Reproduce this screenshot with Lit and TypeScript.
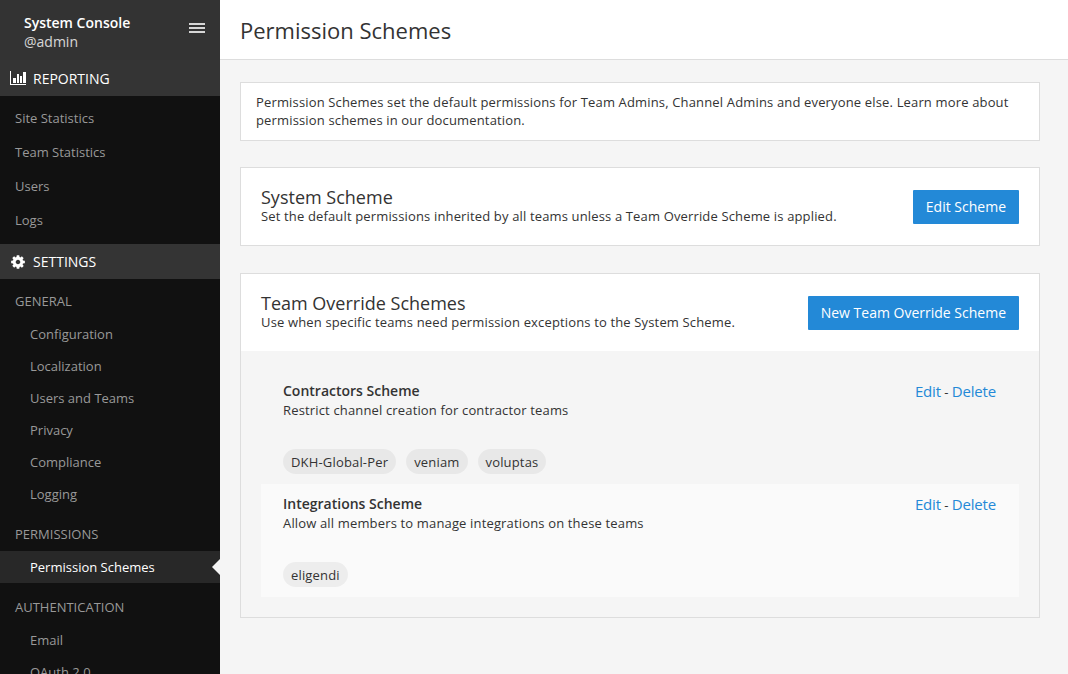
import { LitElement, html, css, svg } from "lit";
import { customElement, property } from "lit/decorators.js";

interface NavGroup {
  title: string;
  items: string[];
}

interface Scheme {
  name: string;
  description: string;
  teams: string[];
}

const reporting = ["Site Statistics", "Team Statistics", "Users", "Logs"];

const groups: NavGroup[] = [
  {
    title: "GENERAL",
    items: ["Configuration", "Localization", "Users and Teams", "Privacy", "Compliance", "Logging"],
  },
  { title: "PERMISSIONS", items: ["Permission Schemes"] },
  { title: "AUTHENTICATION", items: ["Email", "OAuth 2.0"] },
];

const schemes: Scheme[] = [
  {
    name: "Contractors Scheme",
    description: "Restrict channel creation for contractor teams",
    teams: ["DKH-Global-Per", "veniam", "voluptas"],
  },
  {
    name: "Integrations Scheme",
    description: "Allow all members to manage integrations on these teams",
    teams: ["eligendi"],
  },
];

const chartIcon = html`<svg width="16" height="15" viewBox="0 0 16 15" fill="currentColor" shape-rendering="crispEdges">
  ${svg`<path d="M0 0h1v13h15v1h-16z"/><path d="M3 7h3v5h-3zM7 3h2v9h-2zM10 5h2v7h-2zM13 1h3v11h-3z"/>`}
</svg>`;

const gearIcon = html`<svg width="16" height="16" viewBox="0 0 1792 1792" fill="currentColor">
  ${svg`<path d="M1152 896q0-106-75-181t-181-75-181 75-75 181 75 181 181 75 181-75 75-181zm512-109v222q0 12-8 23t-20 13l-185 28q-19 54-39 91 35 50 107 138 10 12 10 25t-9 23q-27 37-99 108t-94 71q-12 0-26-9l-138-108q-44 23-91 38-16 136-29 186-7 28-36 28h-222q-14 0-24.500-8.500t-11.500-21.500l-28-184q-49-16-90-37l-141 107q-10 9-25 9-14 0-25-11-126-114-165-168-7-10-7-23 0-12 8-23 15-21 51-66.500t54-70.500q-27-50-41-99l-183-27q-13-2-21-12.500t-8-23.500v-222q0-12 8-23t19-13l186-28q14-46 39-92-40-57-107-138-10-12-10-24 0-10 9-23 26-36 98.500-107.500t94.500-71.500q13 0 26 10l138 107q44-23 91-38 16-136 29-186 7-28 36-28h222q14 0 24.500 8.500t11.500 21.500l28 184q49 16 90 37l142-107q9-9 24-9 13 0 25 10 129 119 165 170 7 8 7 22 0 12-8 23-15 21-51 66.500t-54 70.500q26 50 41 98l183 28q13 2 21 12.500t8 23.500z"/>`}
</svg>`;

@customElement("console-sidebar")
export class ConsoleSidebar extends LitElement {
  @property() active = "Permission Schemes";

  static styles = css`
    :host {
      display: block;
      height: 100%;
      overflow: hidden;
      background: #111;
      color: #999;
      font-size: 13px;
    }
    .header {
      display: flex;
      justify-content: space-between;
      height: 60px;
      padding: 13px 15px 0 24px;
      box-sizing: border-box;
      background: #333;
      color: #fff;
      font-size: 14px;
      line-height: 19px;
    }
    .name {
      font-weight: 600;
    }
    .user {
      opacity: 0.8;
    }
    .menu {
      display: flex;
      flex-direction: column;
      gap: 2px;
      padding-top: 10px;
    }
    .menu i {
      width: 16px;
      height: 2px;
      background: #d6d6d6;
    }
    .section {
      display: flex;
      align-items: center;
      gap: 7px;
      height: 36px;
      padding-left: 10px;
      background: #343434;
      color: #fff;
      font-size: 14px;
      line-height: 35px;
    }
    .section.reporting {
      height: 36px;
      padding-top: 1px;
      box-sizing: border-box;
    }
    .section.settings {
      height: 35px;
    }
    .section svg {
      display: block;
    }
    .reports {
      padding: 5px 0 7px;
    }
    .report {
      height: 34px;
      padding-left: 15px;
      line-height: 34px;
    }
    .groups {
      display: flex;
      flex-direction: column;
      gap: 7px;
      padding-top: 5px;
    }
    .title {
      height: 34px;
      padding-left: 15px;
      line-height: 34px;
    }
    .item {
      display: flex;
      justify-content: space-between;
      align-items: center;
      height: 32px;
      padding-left: 30px;
      line-height: 32px;
    }
    .item.active {
      background: #282828;
      color: #fff;
    }
    .arrow {
      width: 8px;
      height: 16px;
      background: #f5f5f5;
      clip-path: polygon(100% 0, 100% 100%, 0 50%);
    }
  `;

  render() {
    return html`
      <div class="header">
        <div>
          <div class="name">System Console</div>
          <div class="user">@admin</div>
        </div>
        <div class="menu"><i></i><i></i><i></i></div>
      </div>
      <div class="section reporting">${chartIcon}<span>REPORTING</span></div>
      <div class="reports">${reporting.map((r) => html`<div class="report">${r}</div>`)}</div>
      <div class="section settings">${gearIcon}<span>SETTINGS</span></div>
      <div class="groups">
        ${groups.map(
          (g) => html`<div>
            <div class="title">${g.title}</div>
            ${g.items.map((i) =>
              i === this.active
                ? html`<div class="item active"><span>${i}</span><span class="arrow"></span></div>`
                : html`<div class="item">${i}</div>`
            )}
          </div>`
        )}
      </div>
    `;
  }
}

@customElement("scheme-row")
export class SchemeRow extends LitElement {
  @property({ attribute: false }) scheme!: Scheme;

  static styles = css`
    :host {
      display: block;
      height: 113px;
      padding: 10px 23px 0 22px;
      box-sizing: border-box;
    }
    .top {
      display: flex;
      justify-content: space-between;
    }
    .name {
      font-size: 14px;
      font-weight: 600;
      line-height: 20px;
    }
    .description {
      font-size: 13px;
      line-height: 18px;
      letter-spacing: 0.155px;
    }
    .actions {
      font-size: 13px;
      line-height: 21px;
    }
    a {
      color: #2389d7;
      font-size: 15px;
      letter-spacing: -0.18px;
    }
    .teams {
      display: flex;
      gap: 10px;
      margin-top: 30px;
    }
    .team {
      height: 25px;
      padding: 0 8px;
      border-radius: 13px;
      background: rgba(0, 0, 0, 0.05);
      font-size: 13px;
      line-height: 26px;
      letter-spacing: 0.17px;
    }
  `;

  render() {
    const s = this.scheme;
    return html`
      <div class="top">
        <div>
          <div class="name">${s.name}</div>
          <div class="description">${s.description}</div>
        </div>
        <div class="actions"><a>Edit</a> - <a>Delete</a></div>
      </div>
      <div class="teams">${s.teams.map((t) => html`<span class="team">${t}</span>`)}</div>
    `;
  }
}

@customElement("app-root")
export class AppRoot extends LitElement {
  static styles = css`
    :host {
      display: grid;
      grid-template-columns: 220px 1fr;
      height: 100vh;
      overflow: hidden;
      background: #f5f5f5;
      color: #333;
      font-family: "Open Sans", sans-serif;
      font-size: 13px;
    }
    .header {
      height: 60px;
      padding-left: 20px;
      box-sizing: border-box;
      border-bottom: 1px solid #ddd;
      background: #fff;
      font-size: 22px;
      line-height: 61px;
    }
    .content {
      display: flex;
      flex-direction: column;
      padding: 22px 28px 0 20px;
    }
    .box {
      box-sizing: border-box;
      border: 1px solid #ddd;
      background: #fff;
    }
    .banner {
      height: 59px;
      padding: 10px 15px 0;
      line-height: 18px;
      letter-spacing: 0.155px;
    }
    .system {
      height: 79px;
      margin-top: 26px;
    }
    .teams {
      height: 345px;
      margin-top: 27px;
      background: #f5f5f5;
    }
    .top {
      display: flex;
      justify-content: space-between;
      align-items: flex-start;
      height: 77px;
      padding: 22px 20px 0;
      box-sizing: border-box;
      background: #fff;
    }
    .heading {
      margin-top: -3px;
      font-size: 18px;
      line-height: 20px;
    }
    .sub {
      line-height: 18px;
      letter-spacing: 0.15px;
    }
    .button {
      height: 34px;
      padding: 0 13px;
      border-radius: 1px;
      background: #2389d7;
      color: #fff;
      font-size: 14px;
      line-height: 34px;
    }
    .rows {
      padding: 20px;
    }
    scheme-row:nth-child(even) {
      background: #fafafa;
    }
  `;

  render() {
    return html`
      <console-sidebar></console-sidebar>
      <main>
        <div class="header">Permission Schemes</div>
        <div class="content">
          <div class="box banner">
            Permission Schemes set the default permissions for Team Admins, Channel Admins and
            everyone else. Learn more about permission schemes in our documentation.
          </div>
          <div class="box system">
            <div class="top">
              <div>
                <div class="heading">System Scheme</div>
                <div class="sub">
                  Set the default permissions inherited by all teams unless a Team Override Scheme
                  is applied.
                </div>
              </div>
              <div class="button">Edit Scheme</div>
            </div>
          </div>
          <div class="box teams">
            <div class="top">
              <div>
                <div class="heading">Team Override Schemes</div>
                <div class="sub">
                  Use when specific teams need permission exceptions to the System Scheme.
                </div>
              </div>
              <div class="button">New Team Override Scheme</div>
            </div>
            <div class="rows">
              ${schemes.map((s) => html`<scheme-row .scheme=${s}></scheme-row>`)}
            </div>
          </div>
        </div>
      </main>
    `;
  }
}
